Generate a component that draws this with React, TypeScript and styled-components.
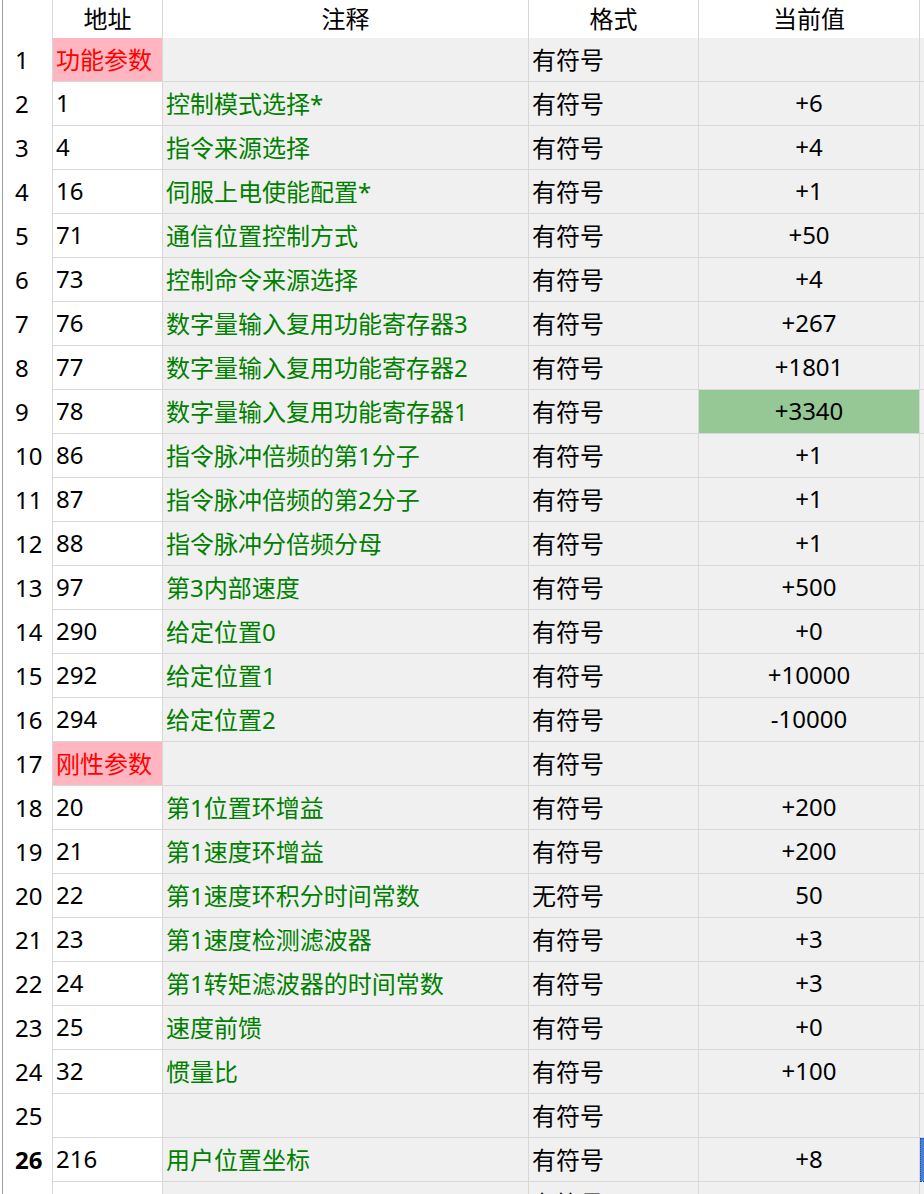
import React from "react";
import styled, { createGlobalStyle, css } from "styled-components";

const Global = createGlobalStyle`
  html, body { margin: 0; padding: 0; background: #ffffff; overflow: hidden; }
  body { font-family: "Noto Sans", "Noto Sans CJK SC", sans-serif; }
`;

const Sheet = styled.div`
  width: 924px;
  height: 1194px;
  overflow: hidden;
  position: relative;
  background: #ffffff;
`;

const Table = styled.div`
  margin-left: 2px;
  border-left: 1px solid #a0a0a0;
  box-shadow: inset 1px 0 0 #d4d4d4;
  display: flex;
  flex-direction: column;
  width: 1040px;
`;

const COLS = "50px 110px 366px 170px 221px 120px";

const HeaderRow = styled.div`
  display: grid;
  grid-template-columns: ${COLS};
  height: 38px;
  background: #ffffff;
`;

const HeadCell = styled.div<{ $noBorder?: boolean }>`
  border-right: 1px solid ${(p) => (p.$noBorder ? "transparent" : "#d8d8d8")};
  display: flex;
  align-items: center;
  justify-content: center;
  font-size: 24px;
  color: #000;
  padding-bottom: 7px;
  box-sizing: border-box;
`;

const Row = styled.div`
  display: grid;
  grid-template-columns: ${COLS};
  height: 44px;
`;

const RowNum = styled.div<{ $bold?: boolean }>`
  background: #ffffff;
  border-right: 1px solid #d8d8d8;
  display: flex;
  align-items: center;
  padding-left: 12px;
  padding-bottom: 1px;
  box-sizing: border-box;
  font-size: 24px;
  color: #000;
  font-weight: ${(p) => (p.$bold ? 700 : 400)};
`;

type Tone = "white" | "gray" | "pink" | "green" | "select";

const toneBg: Record<Tone, string> = {
  white: "#ffffff",
  gray: "#f0f0f0",
  pink: "#ffb6c1",
  green: "#96c896",
  select: "#4a7fd6",
};

const Cell = styled.div<{ $tone: Tone; $align?: "left" | "center"; $color?: string; $pad?: number }>`
  background: ${(p) => toneBg[p.$tone]};
  border-right: 1px solid #d8d8d8;
  border-bottom: 1px solid #d8d8d8;
  box-sizing: border-box;
  display: flex;
  align-items: center;
  justify-content: ${(p) => (p.$align === "center" ? "center" : "flex-start")};
  padding-left: ${(p) => (p.$align === "center" ? 0 : p.$pad ?? 3)}px;
  padding-bottom: 2px;
  font-size: 24px;
  color: ${(p) => p.$color ?? "#000"};
  white-space: nowrap;
  overflow: hidden;
  ${(p) =>
    p.$tone === "select" &&
    css`
      outline: 1px dotted #1d4fa0;
      outline-offset: -1px;
    `}
`;

type RowData = {
  n: number;
  addr: string;
  comment: string;
  fmt: string;
  val: string;
  section?: boolean;
  highlight?: boolean;
  current?: boolean;
};

const rows: RowData[] = [
  { n: 1, addr: "功能参数", comment: "", fmt: "有符号", val: "", section: true },
  { n: 2, addr: "1", comment: "控制模式选择*", fmt: "有符号", val: "+6" },
  { n: 3, addr: "4", comment: "指令来源选择", fmt: "有符号", val: "+4" },
  { n: 4, addr: "16", comment: "伺服上电使能配置*", fmt: "有符号", val: "+1" },
  { n: 5, addr: "71", comment: "通信位置控制方式", fmt: "有符号", val: "+50" },
  { n: 6, addr: "73", comment: "控制命令来源选择", fmt: "有符号", val: "+4" },
  { n: 7, addr: "76", comment: "数字量输入复用功能寄存器3", fmt: "有符号", val: "+267" },
  { n: 8, addr: "77", comment: "数字量输入复用功能寄存器2", fmt: "有符号", val: "+1801" },
  { n: 9, addr: "78", comment: "数字量输入复用功能寄存器1", fmt: "有符号", val: "+3340", highlight: true },
  { n: 10, addr: "86", comment: "指令脉冲倍频的第1分子", fmt: "有符号", val: "+1" },
  { n: 11, addr: "87", comment: "指令脉冲倍频的第2分子", fmt: "有符号", val: "+1" },
  { n: 12, addr: "88", comment: "指令脉冲分倍频分母", fmt: "有符号", val: "+1" },
  { n: 13, addr: "97", comment: "第3内部速度", fmt: "有符号", val: "+500" },
  { n: 14, addr: "290", comment: "给定位置0", fmt: "有符号", val: "+0" },
  { n: 15, addr: "292", comment: "给定位置1", fmt: "有符号", val: "+10000" },
  { n: 16, addr: "294", comment: "给定位置2", fmt: "有符号", val: "-10000" },
  { n: 17, addr: "刚性参数", comment: "", fmt: "有符号", val: "", section: true },
  { n: 18, addr: "20", comment: "第1位置环增益", fmt: "有符号", val: "+200" },
  { n: 19, addr: "21", comment: "第1速度环增益", fmt: "有符号", val: "+200" },
  { n: 20, addr: "22", comment: "第1速度环积分时间常数", fmt: "无符号", val: "50" },
  { n: 21, addr: "23", comment: "第1速度检测滤波器", fmt: "有符号", val: "+3" },
  { n: 22, addr: "24", comment: "第1转矩滤波器的时间常数", fmt: "有符号", val: "+3" },
  { n: 23, addr: "25", comment: "速度前馈", fmt: "有符号", val: "+0" },
  { n: 24, addr: "32", comment: "惯量比", fmt: "有符号", val: "+100" },
  { n: 25, addr: "", comment: "", fmt: "有符号", val: "" },
  { n: 26, addr: "216", comment: "用户位置坐标", fmt: "有符号", val: "+8", current: true },
  { n: 27, addr: "", comment: "", fmt: "有符号", val: "" },
];

export default function App() {
  return (
    <Sheet>
      <Global />
      <Table>
        <HeaderRow>
          <HeadCell />
          <HeadCell>地址</HeadCell>
          <HeadCell>注释</HeadCell>
          <HeadCell>格式</HeadCell>
          <HeadCell>当前值</HeadCell>
          <HeadCell $noBorder />
        </HeaderRow>
        {rows.map((r) => (
          <Row key={r.n}>
            <RowNum $bold={r.current}>{r.n}</RowNum>
            <Cell
              $tone={r.section ? "pink" : "white"}
              $color={r.section ? "#ff0000" : "#000"}
            >
              {r.addr}
            </Cell>
            <Cell $tone="gray" $color="#008000">
              {r.comment}
            </Cell>
            <Cell $tone="gray" $pad={3}>
              {r.fmt}
            </Cell>
            <Cell $tone={r.highlight ? "green" : "gray"} $align="center">
              {r.val}
            </Cell>
            <Cell $tone={r.current ? "select" : "gray"} />
          </Row>
        ))}
      </Table>
    </Sheet>
  );
}
